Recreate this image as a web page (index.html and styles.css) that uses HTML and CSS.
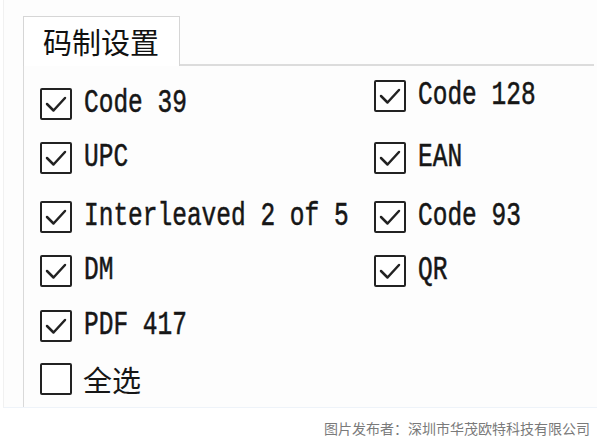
FILE: index.html
```html
<!DOCTYPE html>
<html lang="zh-CN">
<head>
<meta charset="utf-8">
<title>码制设置</title>
<link rel="stylesheet" href="styles.css">
</head>
<body>
  <div class="panel">
    <div class="tabbar">
      <div class="tab">码制设置</div>
      <div class="tabline"></div>
    </div>
    <div class="options">
      <label class="opt"><span class="box checked"><svg viewBox="0 0 28 28"><polyline points="5,14 11.5,20.5 23,8"/></svg></span><span class="label">Code 39</span></label>
      <label class="opt raised"><span class="box checked"><svg viewBox="0 0 28 28"><polyline points="5,14 11.5,20.5 23,8"/></svg></span><span class="label">Code 128</span></label>
      <label class="opt"><span class="box checked"><svg viewBox="0 0 28 28"><polyline points="5,14 11.5,20.5 23,8"/></svg></span><span class="label">UPC</span></label>
      <label class="opt"><span class="box checked"><svg viewBox="0 0 28 28"><polyline points="5,14 11.5,20.5 23,8"/></svg></span><span class="label">EAN</span></label>
      <label class="opt"><span class="box checked"><svg viewBox="0 0 28 28"><polyline points="5,14 11.5,20.5 23,8"/></svg></span><span class="label">Interleaved 2 of 5</span></label>
      <label class="opt"><span class="box checked"><svg viewBox="0 0 28 28"><polyline points="5,14 11.5,20.5 23,8"/></svg></span><span class="label">Code 93</span></label>
      <label class="opt"><span class="box checked"><svg viewBox="0 0 28 28"><polyline points="5,14 11.5,20.5 23,8"/></svg></span><span class="label">DM</span></label>
      <label class="opt"><span class="box checked"><svg viewBox="0 0 28 28"><polyline points="5,14 11.5,20.5 23,8"/></svg></span><span class="label">QR</span></label>
      <label class="opt wide"><span class="box checked"><svg viewBox="0 0 28 28"><polyline points="5,14 11.5,20.5 23,8"/></svg></span><span class="label">PDF 417</span></label>
      <label class="opt wide"><span class="box"></span><span class="label cjk">全选</span></label>
    </div>
  </div>
  <p class="credit">图片发布者：深圳市华茂欧特科技有限公司</p>
</body>
</html>
```

FILE: styles.css
```css
html, body {
  margin: 0;
  padding: 0;
  background: #ffffff;
}

body {
  width: 600px;
  height: 443px;
  overflow: hidden;
  font-family: "Noto Sans CJK SC", sans-serif;
  color: #141414;
}

/* settings page surface */
.panel {
  margin: 0 3px;
  height: 408px;
  box-sizing: border-box;
  padding: 16px 3px 0 19px;
  background: #fdfdfd;
  border-left: 1px solid #f1f1f1;
  border-bottom: 1px solid #eef3f9;
  display: flex;
  flex-direction: column;
}

/* group box tab header */
.tabbar {
  display: flex;
  height: 50px;
  flex: none;
}

.tab {
  width: 136px;
  box-sizing: content-box;
  border: 1px solid #d6d6d6;
  border-bottom: none;
  background: #ffffff;
  font-size: 29px;
  line-height: 48px;
  padding-left: 19px;
  white-space: nowrap;
  color: #111111;
}

.tabline {
  flex: 1;
  border-bottom: 2px solid #dcdcdc;
}

/* checkbox grid */
.options {
  flex: 1;
  border-left: 1px solid #d9d9d9;
  padding: 22px 0 0 16px;
  display: grid;
  grid-template-columns: 334px 1fr;
  grid-template-rows: 54px 59px 54px 55px 53px 32px;
  align-items: start;
}

.opt {
  display: flex;
  align-items: center;
  gap: 12px;
  height: 32px;
}

.opt.raised {
  margin-top: -8px;
}

.opt.wide {
  grid-column: 1 / 2;
}

.box {
  width: 32px;
  height: 32px;
  box-sizing: border-box;
  border: 2px solid #222222;
  border-radius: 2px;
  background: #ffffff;
  flex: none;
  display: flex;
}

.box svg {
  width: 28px;
  height: 28px;
  fill: none;
  stroke: #222222;
  stroke-width: 2.5;
  stroke-linecap: round;
  stroke-linejoin: round;
}

.label {
  display: inline-block;
  font-family: "Liberation Mono", monospace;
  font-size: 24.5px;
  line-height: 32px;
  white-space: pre;
  transform: scaleY(1.36);
  -webkit-text-stroke: 0.4px #161616;
  color: #161616;
}

.label.cjk {
  font-family: "Noto Sans CJK SC", sans-serif;
  font-size: 29px;
  transform: none;
  -webkit-text-stroke: 0;
  margin-left: -1px;
}

.credit {
  margin: 10px 0 0;
  padding-right: 10px;
  text-align: right;
  font-size: 14px;
  line-height: 20px;
  color: #7a7a7a;
}
```
